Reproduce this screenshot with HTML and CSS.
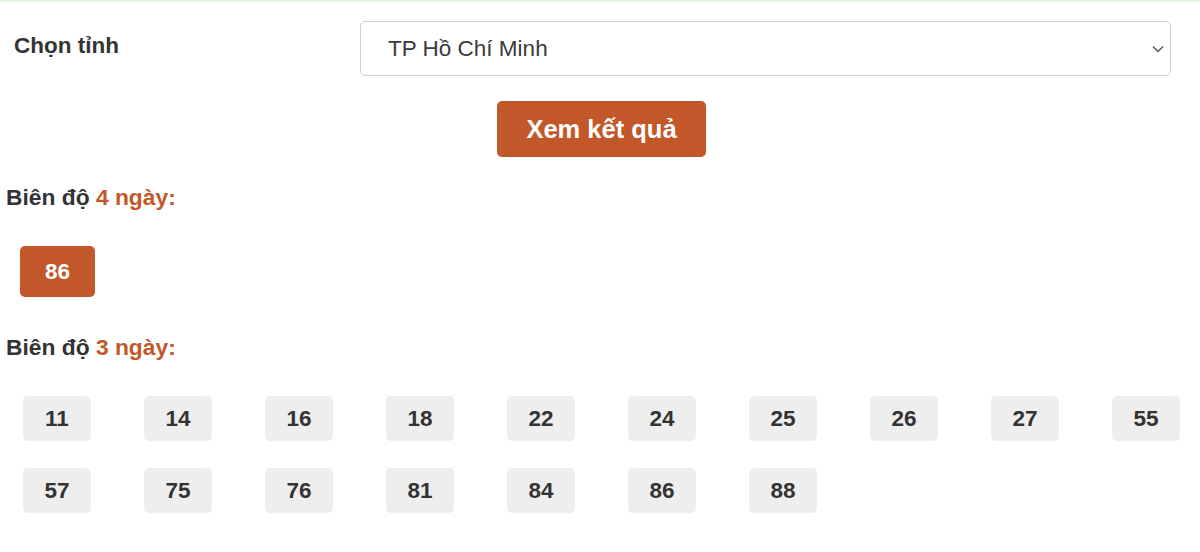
FILE: index.html
```html
<!DOCTYPE html>
<html lang="vi">
<head>
<meta charset="utf-8">
<title>Biên độ</title>
<link rel="stylesheet" href="styles.css">
</head>
<body>
<div class="top-line"></div>
<div class="form-row">
  <label class="form-label" for="tinh">Chọn tỉnh</label>
  <div class="select-wrap">
    <select id="tinh" class="select">
      <option>TP Hồ Chí Minh</option>
    </select>
    <svg class="chevron" width="12" height="8" viewBox="0 0 12 8"><path d="M1 1.5 L6 6.5 L11 1.5" fill="none" stroke="#555" stroke-width="1.3"/></svg>
  </div>
</div>
<div class="btn-row">
  <button class="btn">Xem kết quả</button>
</div>
<h3 class="heading">Biên độ <span class="hl">4 ngày:</span></h3>
<div class="badge-row">
  <span class="badge">86</span>
</div>
<h3 class="heading h2">Biên độ <span class="hl">3 ngày:</span></h3>
<div class="grid">
  <span class="chip">11</span><span class="chip">14</span><span class="chip">16</span><span class="chip">18</span><span class="chip">22</span>
  <span class="chip">24</span><span class="chip">25</span><span class="chip">26</span><span class="chip">27</span><span class="chip">55</span>
  <span class="chip">57</span><span class="chip">75</span><span class="chip">76</span><span class="chip">81</span><span class="chip">84</span>
  <span class="chip">86</span><span class="chip">88</span>
</div>
</body>
</html>
```
FILE: styles.css
```css
html, body {
  margin: 0;
  padding: 0;
  background: #fff;
  font-family: "Liberation Sans", Arial, sans-serif;
  color: #333;
}
.top-line {
  height: 2px;
  background: #eaf6e4;
}
.form-row {
  display: flex;
  align-items: flex-start;
  padding: 19px 29px 0 14px;
}
.form-label {
  width: 346px;
  flex: none;
  margin-top: 12px;
  font-size: 22.5px;
  line-height: 25px;
  font-weight: bold;
  color: #333;
}
.select-wrap {
  position: relative;
  flex: 1;
}
.select {
  display: block;
  width: 100%;
  height: 55px;
  box-sizing: border-box;
  border: 1px solid #cfcfcf;
  border-radius: 5px;
  background: #fff;
  padding: 0 40px 0 27px;
  font-family: "Liberation Sans", Arial, sans-serif;
  font-size: 22.5px;
  color: #3a3a3a;
  -webkit-appearance: none;
  appearance: none;
  outline: none;
}
.chevron {
  position: absolute;
  right: 7px;
  top: 24px;
  pointer-events: none;
}
.btn-row {
  display: flex;
  justify-content: center;
  padding-left: 3px;
  margin-top: 25px;
}
.btn {
  width: 209px;
  height: 56px;
  border: none;
  border-radius: 5px;
  background: #c2582a;
  color: #fff;
  font-family: "Liberation Sans", Arial, sans-serif;
  font-size: 25.5px;
  font-weight: bold;
  padding: 0;
}
.heading {
  margin: 27px 0 0 6px;
  font-size: 22.8px;
  line-height: 26px;
  font-weight: bold;
  color: #333;
}
.h2 {
  margin-top: 37px;
}
.hl {
  color: #c2582a;
}
.badge-row {
  display: flex;
  padding-left: 20px;
  margin-top: 36px;
}
.badge {
  display: flex;
  align-items: center;
  justify-content: center;
  width: 75px;
  height: 51px;
  border-radius: 5px;
  background: #c2582a;
  color: #fff;
  font-size: 22.5px;
  font-weight: bold;
}
.grid {
  display: grid;
  grid-template-columns: repeat(10, 68px);
  column-gap: 53px;
  row-gap: 27px;
  padding-left: 23px;
  margin-top: 36px;
}
.chip {
  display: flex;
  align-items: center;
  justify-content: center;
  height: 45px;
  border-radius: 5px;
  background: #eeeeee;
  color: #333;
  font-size: 22.5px;
  font-weight: bold;
}
```
